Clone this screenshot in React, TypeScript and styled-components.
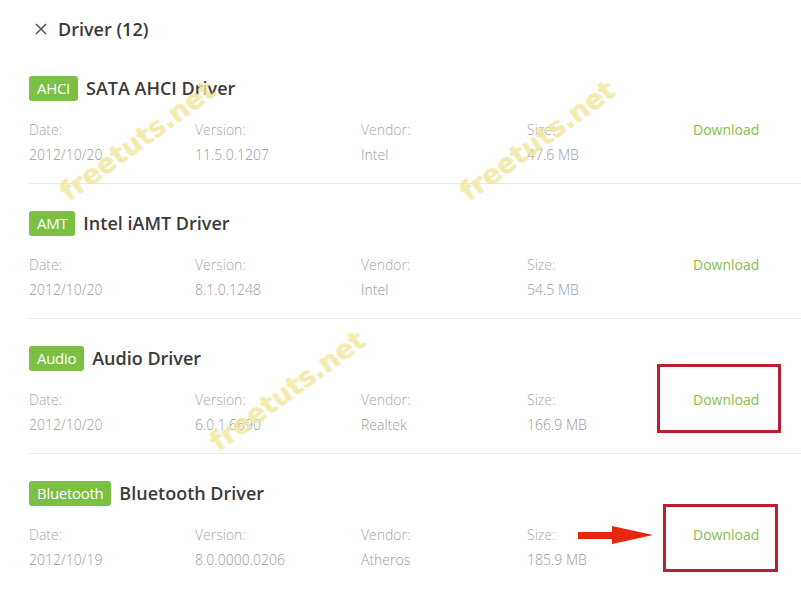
import React from 'react';
import styled, { createGlobalStyle } from 'styled-components';

const GlobalStyle = createGlobalStyle`
  html, body {
    margin: 0;
    padding: 0;
    background: #fff;
  }
  body {
    font-family: "Open Sans", "Noto Sans", Arial, sans-serif;
  }
`;

const Page = styled.div`
  position: relative;
  width: 801px;
  height: 596px;
  overflow: hidden;
  padding-left: 29px;
  box-sizing: border-box;
`;

const Header = styled.div`
  display: flex;
  align-items: center;
  gap: 11px;
  height: 39px;
  padding-top: 9px;
  padding-left: 6px;
  color: #3a3a3a;
  font-size: 18px;
  font-weight: 600;
`;

const Section = styled.div<{ $first?: boolean }>`
  border-top: ${p => (p.$first ? 'none' : '1px solid #e9e9e9')};
  padding: ${p => (p.$first ? '27px' : '26px')} 0 16px 0;
`;

const TitleRow = styled.div`
  display: flex;
  align-items: center;
  gap: 8px;
  height: 26px;
  margin-bottom: 16px;
`;

const Badge = styled.span`
  display: inline-flex;
  align-items: center;
  height: 25px;
  padding: 0 8px;
  border-radius: 3px;
  background: #7cbf45;
  color: #fff;
  font-size: 15px;
  letter-spacing: -0.3px;
`;

const Title = styled.span`
  font-size: 18px;
  font-weight: 600;
  color: #3a3a3a;
`;

const InfoGrid = styled.div`
  display: grid;
  grid-template-columns: 166px 166px 166px 166px auto;
  grid-auto-rows: 25px;
  align-items: center;
`;

const Label = styled.div`
  font-size: 14px;
  font-weight: 300;
  color: #a8a8a8;
`;

const Value = styled.div`
  font-size: 14px;
  font-weight: 300;
  color: #9a9a9a;
`;

const DownloadCell = styled.div`
  position: relative;
  font-size: 14px;
  color: #86bd4c;
`;

const Highlight = styled.div<{ $left: number; $top: number; $w: number; $h: number }>`
  position: absolute;
  left: ${p => p.$left}px;
  top: ${p => p.$top}px;
  width: ${p => p.$w}px;
  height: ${p => p.$h}px;
  border: 3px solid #b8202f;
  box-sizing: border-box;
`;

const Arrow = styled.svg`
  position: absolute;
  left: -115px;
  top: 0px;
`;

const Watermark = styled.div<{ $x: number; $y: number }>`
  position: absolute;
  left: ${p => p.$x}px;
  top: ${p => p.$y}px;
  transform: rotate(-36deg);
  font-family: "DejaVu Sans", sans-serif;
  font-weight: bold;
  font-size: 27px;
  color: rgba(244, 234, 160, 0.75);
  text-shadow: 1px 1px 0 rgba(220, 210, 140, 0.35);
  pointer-events: none;
  white-space: nowrap;
`;

const CloseIcon = () => (
  <svg width="12" height="12" viewBox="0 0 12 12">
    <path d="M1 1 L11 11 M11 1 L1 11" stroke="#555" strokeWidth="1.5" fill="none" />
  </svg>
);

interface Driver {
  tag: string;
  name: string;
  date: string;
  version: string;
  vendor: string;
  size: string;
  mark?: 'box' | 'arrow';
}

const drivers: Driver[] = [
  { tag: 'AHCI', name: 'SATA AHCI Driver', date: '2012/10/20', version: '11.5.0.1207', vendor: 'Intel', size: '47.6 MB' },
  { tag: 'AMT', name: 'Intel iAMT Driver', date: '2012/10/20', version: '8.1.0.1248', vendor: 'Intel', size: '54.5 MB' },
  { tag: 'Audio', name: 'Audio Driver', date: '2012/10/20', version: '6.0.1.6690', vendor: 'Realtek', size: '166.9 MB', mark: 'box' },
  { tag: 'Bluetooth', name: 'Bluetooth Driver', date: '2012/10/19', version: '8.0.0000.0206', vendor: 'Atheros', size: '185.9 MB', mark: 'arrow' },
];

export default function App() {
  return (
    <>
      <GlobalStyle />
      <Page>
        <Header>
          <CloseIcon />
          <span>Driver (12)</span>
        </Header>
        {drivers.map((d, i) => (
          <Section key={i} $first={i === 0}>
            <TitleRow>
              <Badge>{d.tag}</Badge>
              <Title>{d.name}</Title>
            </TitleRow>
            <InfoGrid>
              <Label>Date:</Label>
              <Label>Version:</Label>
              <Label>Vendor:</Label>
              <Label>Size:</Label>
              <DownloadCell>
                Download
                {d.mark === 'box' && <Highlight $left={-36} $top={-26} $w={124} $h={69} />}
                {d.mark === 'arrow' && (
                  <>
                    <Highlight $left={-30} $top={-21} $w={115} $h={68} />
                    <Arrow width="76" height="20" viewBox="0 0 76 20">
                      <rect x="0" y="7" width="38" height="7" fill="#e8260f" />
                      <polygon points="34,1 75,10 34,19" fill="#e8260f" />
                    </Arrow>
                  </>
                )}
              </DownloadCell>
              <Value>{d.date}</Value>
              <Value>{d.version}</Value>
              <Value>{d.vendor}</Value>
              <Value>{d.size}</Value>
            </InfoGrid>
          </Section>
        ))}
        <Watermark $x={45} $y={125}>freetuts.net</Watermark>
        <Watermark $x={445} $y={125}>freetuts.net</Watermark>
        <Watermark $x={195} $y={375}>freetuts.net</Watermark>
      </Page>
    </>
  );
}
